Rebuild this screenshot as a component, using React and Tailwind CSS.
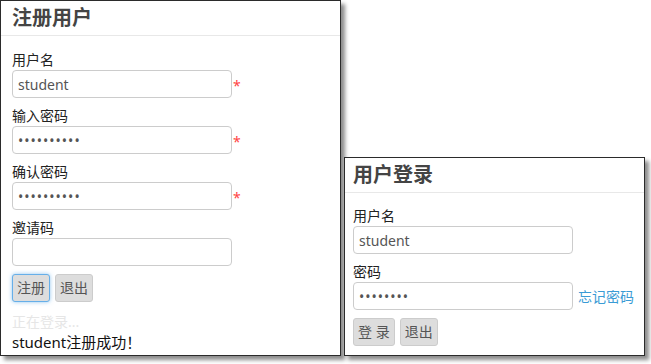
import { useState } from "react";

const inputCls =
  "h-[28px] w-[220px] rounded-[4px] border border-[#ccc] bg-white px-[5px] text-[14px] text-[#555] outline-none";

function Field({ label, type = "text", value, required, extra }) {
  const [val, setVal] = useState(value);
  return (
    <div className="mb-[8px]">
      <div className="h-[20px] text-[14px] leading-[20px] text-[#222]">{label}</div>
      <div className="flex items-center">
        <input
          type={type}
          value={val}
          onChange={(e) => setVal(e.target.value)}
          className={inputCls + (type === "password" ? " tracking-[1px]" : "")}
        />
        {required && <span className="ml-[1px] mt-[3px] text-[14px] text-[#f44]">*</span>}
        {extra}
      </div>
    </div>
  );
}

function Btn({ children, focused }) {
  return (
    <button
      className={
        "h-[28px] rounded-[3px] border bg-[#ddd] px-[4px] text-[14px] leading-none text-[#555] " +
        (focused
          ? "border-[#66afe9] shadow-[0_0_4px_rgba(102,175,233,0.7)]"
          : "border-[#ccc]")
      }
    >
      {children}
    </button>
  );
}

function Window({ title, className, padX, children }) {
  return (
    <div
      className={
        "absolute border border-[#2b2b2b] bg-white shadow-[4px_4px_4px_rgba(0,0,0,0.45)] " +
        className
      }
    >
      <div
        className={
          "flex h-[35px] items-center border-b border-[#e8e8e8] text-[20px] font-bold text-[#444] " +
          padX
        }
      >
        {title}
      </div>
      {children}
    </div>
  );
}

export default function App() {
  return (
    <div className="relative h-[364px] w-[651px] overflow-hidden bg-white font-['Noto_Sans','Noto_Sans_CJK_SC',sans-serif]">
      {/* register window */}
      <Window title="注册用户" padX="px-[11px]" className="left-0 top-0 h-[356px] w-[341px]">
        <div className="px-[11px] pt-[14px]">
          <Field label="用户名" value="student" required />
          <Field label="输入密码" type="password" value="1234567890" required />
          <Field label="确认密码" type="password" value="1234567890" required />
          <Field label="邀请码" value="" />
          <div className="mt-[1px] flex gap-[5px]">
            <Btn focused>注册</Btn>
            <Btn>退出</Btn>
          </div>
          <div className="mt-[10px] h-[20px] text-[14px] leading-[20px] text-[#e6e6e6]">正在登录...</div>
          <div className="h-[20px] text-[15px] leading-[20px] text-[#111]">student注册成功！</div>
        </div>
      </Window>

      {/* login window */}
      <Window title="用户登录" padX="px-[8px]" className="left-[344px] top-[157px] h-[199px] w-[301px]">
        <div className="px-[8px] pt-[13px]">
          <Field label="用户名" value="student" />
          <Field
            label="密码"
            type="password"
            value="12345678"
            extra={
              <a href="#" className="ml-[5px] text-[14px] text-[#3a9bd5]">
                忘记密码
              </a>
            }
          />
          <div className="mt-[1px] flex gap-[5px]">
            <Btn>登 录</Btn>
            <Btn>退出</Btn>
          </div>
        </div>
      </Window>
    </div>
  );
}
